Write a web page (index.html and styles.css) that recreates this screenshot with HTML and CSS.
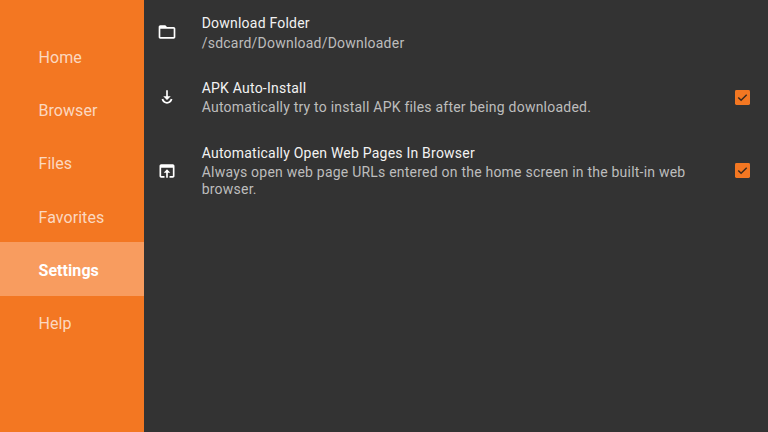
FILE: index.html
```html
<!DOCTYPE html>
<html lang="en">
<head>
<meta charset="utf-8">
<title>Settings</title>
<link rel="stylesheet" href="styles.css">
</head>
<body>
<div class="app">
  <nav class="sidebar">
    <div class="nav-item">Home</div>
    <div class="nav-item">Browser</div>
    <div class="nav-item">Files</div>
    <div class="nav-item">Favorites</div>
    <div class="nav-item active">Settings</div>
    <div class="nav-item">Help</div>
  </nav>
  <main class="content">
    <section class="row">
      <svg class="icon" viewBox="0 0 24 24" width="20" height="20"><path fill="#fff" d="M20 6h-8l-2-2H4c-1.1 0-1.99.9-1.99 2L2 18c0 1.1.9 2 2 2h16c1.1 0 2-.9 2-2V8c0-1.1-.9-2-2-2zm0 12H4V8h16v10z"/></svg>
      <div class="text">
        <div class="title">Download Folder</div>
        <div class="desc">/sdcard/Download/Downloader</div>
      </div>
    </section>
    <section class="row">
      <svg class="icon" viewBox="0 0 24 24" width="20" height="20"><path fill="#fff" d="M11 4h2v7h3.500L12 15.500 7.500 11H11z"/><path fill="none" stroke="#fff" stroke-width="2.200" d="M6.500 14.500c.9 2.800 3 4.500 5.500 4.500s4.600-1.700 5.500-4.500"/></svg>
      <div class="text">
        <div class="title">APK Auto-Install</div>
        <div class="desc">Automatically try to install APK files after being downloaded.</div>
      </div>
      <svg class="check" viewBox="0 0 16 16" width="15" height="15"><rect width="16" height="16" rx="1.500" fill="#f37722"/><path d="M3.500 8l3 3 6-6" fill="none" stroke="#3a2a1e" stroke-width="1.600"/></svg>
    </section>
    <section class="row">
      <svg class="icon" viewBox="0 0 24 24" width="20" height="20"><path fill="#fff" d="M19 4H5c-1.100 0-2 .9-2 2v12c0 1.100.9 2 2 2h4v-2H5V8h14v10h-4v2h4c1.100 0 2-.9 2-2V6c0-1.100-.9-2-2-2zm-7 6l-4 4h3v6h2v-6h3l-4-4z"/></svg>
      <div class="text">
        <div class="title">Automatically Open Web Pages In Browser</div>
        <div class="desc">Always open web page URLs entered on the home screen in the built-in web browser.</div>
      </div>
      <svg class="check" viewBox="0 0 16 16" width="15" height="15"><rect width="16" height="16" rx="1.500" fill="#f37722"/><path d="M3.500 8l3 3 6-6" fill="none" stroke="#3a2a1e" stroke-width="1.600"/></svg>
    </section>
  </main>
</div>
</body>
</html>
```
FILE: styles.css
```css
* { box-sizing: border-box; }
html, body { margin: 0; height: 100%; }
body { font-family: Roboto, "Liberation Sans", sans-serif; overflow: hidden; background: #333; }
.app { display: flex; width: 768px; height: 432px; }
.sidebar {
  width: 144px; flex: none; background: #f37722;
  padding-top: 29px;
}
.nav-item {
  height: 53.33px; display: flex; align-items: center; padding: 3px 0 0 38.5px;
  font-size: 16px; letter-spacing: .06px; color: rgba(255,255,255,.72);
}
.nav-item.active { background: #f89c5f; color: #fff; font-weight: 700; }
.content { flex: 1; background: #333; padding-top: 13px; }
.row { display: flex; align-items: center; padding: 0 18px 0 12.500px; margin-bottom: 26.400px; }
.icon { flex: none; }
.text { flex: 1; margin-left: 25.200px; margin-right: 36px; }
.title { font-size: 14px; line-height: 20px; color: #f2f2f2; letter-spacing: .22px; }
.desc { font-size: 14px; line-height: 17px; margin-top: 1.500px; color: #bdbdbd; letter-spacing: .22px; }
.check { flex: none; }
```
